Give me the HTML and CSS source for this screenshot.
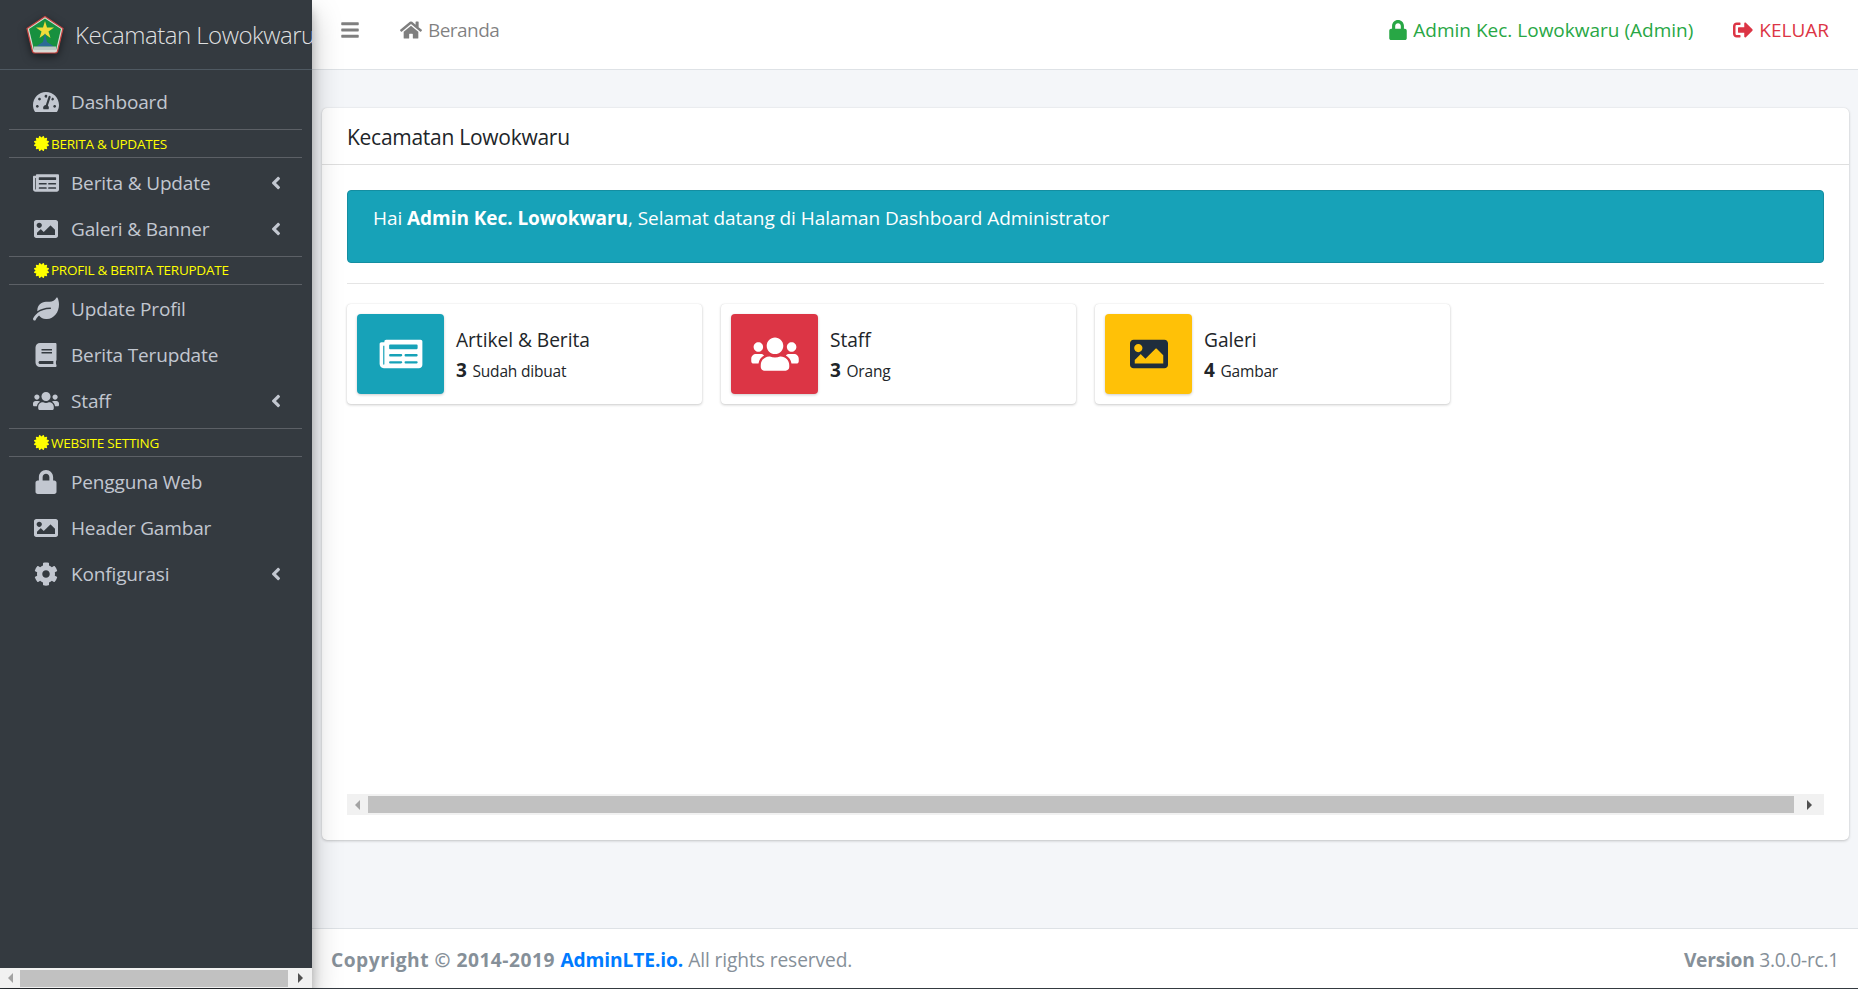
FILE: index.html
```html
<!DOCTYPE html>
<html lang="en">
<head>
  <meta charset="UTF-8" />
  <title>Kecamatan Lowokwaru</title>
  <link rel="stylesheet" href="styles.css">
</head>
<body>
  <svg class="sprite" xmlns="http://www.w3.org/2000/svg">
    <symbol id="i-gauge" viewBox="0 0 576 512"><path d="M288 32C128.94 32 0 160.94 0 320c0 52.8 14.25 102.26 39.06 144.8 5.61 9.62 16.3 15.2 27.44 15.2h443c11.14 0 21.83-5.58 27.44-15.2C561.75 422.26 576 372.8 576 320c0-159.06-128.94-288-288-288zm0 64c14.71 0 26.58 10.13 30.32 23.65-1.11 2.26-2.64 4.23-3.45 6.67l-9.22 27.67c-5.13 3.49-10.97 6.01-17.64 6.01-17.67 0-32-14.33-32-32S270.33 96 288 96zM96 384c-17.67 0-32-14.33-32-32s14.33-32 32-32 32 14.33 32 32-14.33 32-32 32zm48-160c-17.67 0-32-14.33-32-32s14.33-32 32-32 32 14.33 32 32-14.33 32-32 32zm246.77-72.41l-61.33 184C343.13 347.33 352 364.54 352 384c0 11.72-3.38 22.55-8.88 32H232.88c-5.5-9.45-8.88-20.28-8.88-32 0-33.94 26.5-61.43 59.9-63.59l61.34-184.01c4.17-12.56 17.73-19.45 30.36-15.17 12.57 4.19 19.35 17.79 15.17 30.36zm14.66 57.2l15.52-46.55c3.47-1.29 7.13-2.23 11.05-2.23 17.67 0 32 14.33 32 32s-14.33 32-32 32c-11.38-.01-20.89-6.28-26.57-15.22zM480 384c-17.67 0-32-14.33-32-32s14.33-32 32-32 32 14.33 32 32-14.33 32-32 32z"/></symbol>
    <symbol id="i-news" viewBox="0 0 576 512"><path d="M552 64H88c-13.255 0-24 10.745-24 24v8H24c-13.255 0-24 10.745-24 24v272c0 30.928 25.072 56 56 56h472c26.51 0 48-21.49 48-48V88c0-13.255-10.745-24-24-24zM56 400a8 8 0 0 1-8-8V144h16v248a8 8 0 0 1-8 8zm236-16H140c-6.627 0-12-5.373-12-12v-8c0-6.627 5.373-12 12-12h152c6.627 0 12 5.373 12 12v8c0 6.627-5.373 12-12 12zm208 0H348c-6.627 0-12-5.373-12-12v-8c0-6.627 5.373-12 12-12h152c6.627 0 12 5.373 12 12v8c0 6.627-5.373 12-12 12zm-208-96H140c-6.627 0-12-5.373-12-12v-8c0-6.627 5.373-12 12-12h152c6.627 0 12 5.373 12 12v8c0 6.627-5.373 12-12 12zm208 0H348c-6.627 0-12-5.373-12-12v-8c0-6.627 5.373-12 12-12h152c6.627 0 12 5.373 12 12v8c0 6.627-5.373 12-12 12zm0-96H140c-6.627 0-12-5.373-12-12v-40c0-6.627 5.373-12 12-12h360c6.627 0 12 5.373 12 12v40c0 6.627-5.373 12-12 12z"/></symbol>
    <symbol id="i-image" viewBox="0 0 512 512"><path d="M464 448H48c-26.51 0-48-21.49-48-48V112c0-26.51 21.49-48 48-48h416c26.51 0 48 21.49 48 48v288c0 26.51-21.49 48-48 48zM112 120c-30.928 0-56 25.072-56 56s25.072 56 56 56 56-25.072 56-56-25.072-56-56-56zM64 384h384V272l-87.515-87.515c-4.686-4.686-12.284-4.686-16.971 0L208 320l-55.515-55.515c-4.686-4.686-12.284-4.686-16.971 0L64 336v48z"/></symbol>
    <symbol id="i-leaf" viewBox="0 0 576 512"><path d="M546.2 9.7c-5.6-12.5-21.6-13-28.3-1.2C486.9 62.4 431.4 96 368 96h-80C182 96 96 182 96 288c0 7 .8 13.7 1.5 20.5C161.3 262.8 253.4 224 384 224c8.8 0 16 7.2 16 16s-7.2 16-16 16C132.6 256 26 410.1 2.4 468c-6.6 16.3 1.2 34.9 17.5 41.6 16.4 6.8 35-1.1 41.8-17.3 1.5-3.6 20.9-47.9 71.9-90.6 32.4 43.9 94 85.8 174.9 77.2C465.5 467.5 576 326.7 576 154.3c0-50.2-10.8-102.2-29.8-144.6z"/></symbol>
    <symbol id="i-book" viewBox="0 0 448 512"><path d="M448 360V24c0-13.3-10.7-24-24-24H96C43 0 0 43 0 96v320c0 53 43 96 96 96h328c13.3 0 24-10.7 24-24v-16c0-7.5-3.5-14.3-8.9-18.7-4.2-15.4-4.2-59.3 0-74.7 5.4-4.3 8.9-11.1 8.9-18.6zM128 134c0-3.3 2.7-6 6-6h212c3.3 0 6 2.7 6 6v20c0 3.3-2.7 6-6 6H134c-3.3 0-6-2.7-6-6v-20zm0 64c0-3.3 2.7-6 6-6h212c3.3 0 6 2.7 6 6v20c0 3.3-2.7 6-6 6H134c-3.3 0-6-2.7-6-6v-20zm253.4 250H96c-17.7 0-32-14.3-32-32 0-17.6 14.4-32 32-32h285.4c-1.9 17.1-1.9 46.9 0 64z"/></symbol>
    <symbol id="i-users" viewBox="0 0 640 512"><path d="M96 224c35.3 0 64-28.7 64-64s-28.7-64-64-64-64 28.7-64 64 28.7 64 64 64zm448 0c35.3 0 64-28.7 64-64s-28.7-64-64-64-64 28.7-64 64 28.7 64 64 64zm32 32h-64c-17.6 0-33.5 7.1-45.1 18.6 40.3 22.1 68.9 62 75.1 109.4h66c17.7 0 32-14.3 32-32v-32c0-35.3-28.7-64-64-64zm-256 0c61.9 0 112-50.1 112-112S381.9 32 320 32 208 82.1 208 144s50.1 112 112 112zm76.8 32h-8.3c-20.8 10-43.9 16-68.5 16s-47.6-6-68.5-16h-8.3C179.6 288 128 339.6 128 403.2V432c0 26.5 21.5 48 48 48h288c26.5 0 48-21.5 48-48v-28.8c0-63.6-51.6-115.2-115.2-115.2zm-223.7-13.4C161.5 263.1 145.6 256 128 256H64c-35.3 0-64 28.7-64 64v32c0 17.7 14.3 32 32 32h65.9c6.3-47.4 34.9-87.3 75.2-109.4z"/></symbol>
    <symbol id="i-lock" viewBox="0 0 448 512"><path d="M400 224h-24v-72C376 68.2 307.8 0 224 0S72 68.2 72 152v72H48c-26.5 0-48 21.5-48 48v192c0 26.5 21.5 48 48 48h352c26.5 0 48-21.5 48-48V272c0-26.5-21.5-48-48-48zm-104 0H152v-72c0-39.7 32.3-72 72-72s72 32.3 72 72v72z"/></symbol>
    <symbol id="i-cog" viewBox="0 0 512 512"><path d="M487.4 315.7l-42.6-24.6c4.3-23.2 4.3-47 0-70.2l42.6-24.6c4.9-2.8 7.1-8.6 5.5-14-11.1-35.6-30-67.8-54.7-94.6-3.8-4.1-10-5.1-14.8-2.3L380.8 110c-17.9-15.4-38.5-27.3-60.8-35.1V25.8c0-5.6-3.9-10.5-9.4-11.7-36.7-8.2-74.3-7.8-109.2 0-5.5 1.2-9.4 6.1-9.4 11.7V75c-22.2 7.9-42.8 19.8-60.8 35.1L88.7 85.5c-4.9-2.8-11-1.9-14.8 2.3-24.7 26.7-43.6 58.9-54.7 94.6-1.7 5.4.6 11.2 5.5 14L67.3 221c-4.3 23.2-4.3 47 0 70.2l-42.6 24.6c-4.9 2.8-7.1 8.6-5.5 14 11.1 35.6 30 67.8 54.7 94.6 3.8 4.1 10 5.1 14.8 2.3l42.6-24.6c17.9 15.4 38.5 27.3 60.8 35.1v49.2c0 5.6 3.9 10.5 9.4 11.7 36.7 8.2 74.3 7.8 109.2 0 5.5-1.2 9.4-6.1 9.4-11.7v-49.2c22.2-7.9 42.8-19.8 60.8-35.1l42.6 24.6c4.9 2.8 11 1.9 14.8-2.3 24.7-26.7 43.6-58.9 54.7-94.6 1.5-5.5-.7-11.3-5.6-14.1zM256 336c-44.1 0-80-35.9-80-80s35.9-80 80-80 80 35.9 80 80-35.9 80-80 80z"/></symbol>
    <symbol id="i-angle" viewBox="0 0 256 512"><path d="M31.7 239l136-136c9.4-9.4 24.6-9.4 33.9 0l22.6 22.6c9.4 9.4 9.4 24.6 0 33.9L127.9 256l96.4 96.4c9.4 9.4 9.4 24.6 0 33.9L201.7 409c-9.4 9.4-24.6 9.4-33.9 0l-136-136c-9.5-9.4-9.5-24.6-.1-34z"/></symbol>
    <symbol id="i-cert" viewBox="0 0 512 512"><path d="M458.622 255.92l45.985-45.005c13.708-12.977 7.316-36.039-10.664-40.339l-62.65-15.99 17.661-62.015c4.991-17.838-11.829-34.663-29.661-29.671l-61.994 17.667-15.984-62.671C337.085.197 313.765-6.276 300.99 7.228L256 53.57 211.011 7.229c-12.63-13.351-36.047-7.234-40.325 10.668l-15.984 62.671-61.995-17.667C74.87 57.907 58.056 74.738 63.046 92.572l17.661 62.015-62.65 15.99C.069 174.878-6.31 197.944 7.392 210.915l45.985 45.005-45.985 45.004c-13.708 12.977-7.316 36.039 10.664 40.339l62.65 15.99-17.661 62.015c-4.991 17.838 11.829 34.663 29.661 29.671l61.994-17.667 15.984 62.671c4.439 18.575 27.696 24.018 40.325 10.668L256 458.61l44.989 46.001c12.5 13.488 35.987 7.486 40.325-10.668l15.984-62.671 61.994 17.667c17.836 4.994 34.651-11.837 29.661-29.671l-17.661-62.015 62.65-15.99c17.987-4.302 24.366-27.367 10.664-40.339l-45.984-45.004z"/></symbol>
    <symbol id="i-home" viewBox="0 0 576 512"><path d="M280.37 148.26L96 300.11V464a16 16 0 0 0 16 16l112.06-.29a16 16 0 0 0 15.92-16V368a16 16 0 0 1 16-16h64a16 16 0 0 1 16 16v95.64a16 16 0 0 0 16 16.05L464 480a16 16 0 0 0 16-16V300L295.67 148.26a12.19 12.19 0 0 0-15.3 0zM571.6 251.47L488 182.56V44.05a12 12 0 0 0-12-12h-56a12 12 0 0 0-12 12v72.61L318.47 43a48 48 0 0 0-61 0L4.34 251.47a12 12 0 0 0-1.6 16.9l25.5 31A12 12 0 0 0 45.15 301l235.22-193.74a12.19 12.19 0 0 1 15.3 0L530.9 301a12 12 0 0 0 16.9-1.6l25.5-31a12 12 0 0 0-1.7-16.93z"/></symbol>
    <symbol id="i-bars" viewBox="0 0 448 512"><path d="M16 132h416c8.837 0 16-7.163 16-16V76c0-8.837-7.163-16-16-16H16C7.163 60 0 67.163 0 76v40c0 8.837 7.163 16 16 16zm0 160h416c8.837 0 16-7.163 16-16v-40c0-8.837-7.163-16-16-16H16c-8.837 0-16 7.163-16 16v40c0 8.837 7.163 16 16 16zm0 160h416c8.837 0 16-7.163 16-16v-40c0-8.837-7.163-16-16-16H16c-8.837 0-16 7.163-16 16v40c0 8.837 7.163 16 16 16z"/></symbol>
    <symbol id="i-out" viewBox="0 0 512 512"><path d="M497 273L329 441c-15 15-41 4.5-41-17v-96H152c-13.3 0-24-10.7-24-24v-96c0-13.3 10.7-24 24-24h136V88c0-21.4 25.9-32 41-17l168 168c9.3 9.4 9.3 24.6 0 34zM192 436v-40c0-6.6-5.4-12-12-12H96c-17.7 0-32-14.3-32-32V160c0-17.7 14.3-32 32-32h84c6.6 0 12-5.4 12-12V76c0-6.6-5.4-12-12-12H96c-53 0-96 43-96 96v192c0 53 43 96 96 96h84c6.6 0 12-5.4 12-12z"/></symbol>
  </svg>

  <div class="wrapper">
    <aside class="sidebar">
      <a class="brand" href="#">
        <svg class="brand-logo" viewBox="0 0 40 40" xmlns="http://www.w3.org/2000/svg">
          <path d="M20 1.500 38 13.500 32.500 36.500Q32 38 30 38L10 38Q8 38 7.500 36.500L2 13.500Z" fill="#d9dcd6" stroke="#c4433f" stroke-width="1.200"/>
          <path d="M20 3.500 36 14 31 35 9 35 4 14Z" fill="#17903f"/>
          <path d="M20 6 22 12.500 29 12.500 23.500 16.500 25.500 23 20 19 14.500 23 16.500 16.500 11 12.500 18 12.500Z" fill="#f0dc3a"/>
          <path d="M20 18 22 27 29 31.500 11 31.500 18 27Z" fill="#2b6a96"/>
          <rect x="9" y="31.500" width="22" height="3.500" fill="#bcc8c4"/>
        </svg>
        <span class="brand-text">Kecamatan Lowokwaru</span>
      </a>

      <nav class="menu">
        <a class="menu-item" href="#"><svg class="menu-icon"><use href="#i-gauge"/></svg><span>Dashboard</span></a>
        <div class="menu-header"><svg class="sun"><use href="#i-cert"/></svg>BERITA &amp; UPDATES</div>
        <a class="menu-item" href="#"><svg class="menu-icon"><use href="#i-news"/></svg><span>Berita &amp; Update</span><svg class="chevron"><use href="#i-angle"/></svg></a>
        <a class="menu-item" href="#"><svg class="menu-icon"><use href="#i-image"/></svg><span>Galeri &amp; Banner</span><svg class="chevron"><use href="#i-angle"/></svg></a>
        <div class="menu-header"><svg class="sun"><use href="#i-cert"/></svg>PROFIL &amp; BERITA TERUPDATE</div>
        <a class="menu-item" href="#"><svg class="menu-icon"><use href="#i-leaf"/></svg><span>Update Profil</span></a>
        <a class="menu-item" href="#"><svg class="menu-icon"><use href="#i-book"/></svg><span>Berita Terupdate</span></a>
        <a class="menu-item" href="#"><svg class="menu-icon"><use href="#i-users"/></svg><span>Staff</span><svg class="chevron"><use href="#i-angle"/></svg></a>
        <div class="menu-header"><svg class="sun"><use href="#i-cert"/></svg>WEBSITE SETTING</div>
        <a class="menu-item" href="#"><svg class="menu-icon"><use href="#i-lock"/></svg><span>Pengguna Web</span></a>
        <a class="menu-item" href="#"><svg class="menu-icon"><use href="#i-image"/></svg><span>Header Gambar</span></a>
        <a class="menu-item" href="#"><svg class="menu-icon"><use href="#i-cog"/></svg><span>Konfigurasi</span><svg class="chevron"><use href="#i-angle"/></svg></a>
      </nav>

      <div class="hscroll hscroll-side">
        <span class="arrow arrow-left arrow-dim"></span>
        <span class="thumb"></span>
        <span class="arrow arrow-right"></span>
      </div>
    </aside>

    <div class="main">
      <header class="navbar">
        <a class="nav-link nav-bars" href="#"><svg class="nav-icon"><use href="#i-bars"/></svg></a>
        <a class="nav-link nav-home" href="#"><svg class="nav-icon home-icon"><use href="#i-home"/></svg>Beranda</a>
        <a class="nav-link nav-user" href="#"><svg class="nav-icon"><use href="#i-lock"/></svg>Admin Kec. Lowokwaru (Admin)</a>
        <a class="nav-link nav-out" href="#"><svg class="nav-icon"><use href="#i-out"/></svg>KELUAR</a>
      </header>

      <main class="content">
        <section class="card">
          <div class="card-header">Kecamatan Lowokwaru</div>
          <div class="card-body">
            <div class="alert">Hai <b>Admin Kec. Lowokwaru</b>, Selamat datang di Halaman Dashboard Administrator</div>
            <hr class="divider">
            <div class="info-row">
              <div class="info-box">
                <span class="info-icon bg-info"><svg><use href="#i-news"/></svg></span>
                <div class="info-text">
                  <span class="info-title">Artikel &amp; Berita</span>
                  <span class="info-sub"><b>3</b> Sudah dibuat</span>
                </div>
              </div>
              <div class="info-box">
                <span class="info-icon bg-danger"><svg><use href="#i-users"/></svg></span>
                <div class="info-text">
                  <span class="info-title">Staff</span>
                  <span class="info-sub"><b>3</b> Orang</span>
                </div>
              </div>
              <div class="info-box">
                <span class="info-icon bg-warning"><svg><use href="#i-image"/></svg></span>
                <div class="info-text">
                  <span class="info-title">Galeri</span>
                  <span class="info-sub"><b>4</b> Gambar</span>
                </div>
              </div>
            </div>
            <div class="hscroll hscroll-card">
              <span class="arrow arrow-left arrow-dim"></span>
              <span class="thumb"></span>
              <span class="arrow arrow-right"></span>
            </div>
          </div>
        </section>
      </main>

      <footer class="footer">
        <div class="copyright"><b>Copyright &copy; 2014-2019 <a href="#">AdminLTE.io.</a></b> All rights reserved.</div>
        <div class="version"><b>Version</b> 3.0.0-rc.1</div>
      </footer>
    </div>
  </div>
</body>
</html>
```

FILE: styles.css
```css
* {
  box-sizing: border-box;
}

body {
  margin: 0;
  font-family: "Open Sans", "Noto Sans", sans-serif;
  font-size: 18px;
  color: #212529;
  background: #f4f6f9;
  overflow: hidden;
}

a {
  text-decoration: none;
  color: inherit;
}

.sprite {
  display: none;
}

.wrapper {
  display: flex;
  height: 989px;
  border-bottom: 1px solid #343a40;
}

/* SIDEBAR */
.sidebar {
  width: 312px;
  flex: none;
  display: flex;
  flex-direction: column;
  background: #343a40;
  box-shadow: 0 14px 28px rgba(0, 0, 0, 0.25), 0 10px 10px rgba(0, 0, 0, 0.22);
  position: relative;
  z-index: 5;
}

.brand {
  height: 70px;
  flex: none;
  display: flex;
  align-items: center;
  padding-left: 25px;
  border-bottom: 1px solid #4f5962;
  overflow: hidden;
  white-space: nowrap;
}

.brand-logo {
  width: 40px;
  height: 40px;
  flex: none;
  margin-right: 10px;
  filter: drop-shadow(0 3px 4px rgba(0, 0, 0, 0.5));
}

.brand-text {
  font-size: 24px;
  font-weight: 300;
  letter-spacing: -0.5px;
  color: rgba(255, 255, 255, 0.85);
}

.menu {
  flex: 1;
  padding: 9px 10px 0 9px;
}

.menu-item {
  display: flex;
  align-items: center;
  height: 46px;
  padding-left: 24px;
  padding-right: 20px;
  color: #c2c7d0;
  font-size: 19px;
  letter-spacing: -0.15px;
}

.menu-icon {
  width: 26px;
  height: 24px;
  margin-right: 12px;
  fill: #c2c7d0;
  flex: none;
}

.chevron {
  width: 12px;
  height: 20px;
  margin-left: auto;
  fill: #c2c7d0;
}

.menu-header {
  display: flex;
  align-items: center;
  height: 29px;
  margin: 4px 0 1.6px;
  padding-left: 25px;
  border-top: 1px solid #5c6066;
  border-bottom: 1px solid #5c6066;
  color: #ff0;
  font-size: 13.5px;
  letter-spacing: -0.25px;
}

.sun {
  width: 15px;
  height: 15px;
  margin-right: 2px;
  fill: #ff0;
}

/* fake scrollbars, the screenshot has them drawn by the browser */
.hscroll {
  display: flex;
  align-items: center;
  flex: none;
  height: 21px;
  background: #f1f1f1;
}

.hscroll-side {
  height: 20px;
}

.thumb {
  flex: 1;
  height: 17px;
  background: #c1c1c1;
}

.arrow {
  width: 21px;
  flex: none;
  display: flex;
  justify-content: center;
}

.arrow::before {
  content: "";
  border-top: 5px solid transparent;
  border-bottom: 5px solid transparent;
}

.arrow-left::before {
  border-right: 5px solid #505050;
}

.arrow-right::before {
  border-left: 5px solid #505050;
}

.arrow-dim::before {
  border-right-color: #a3a3a3;
}

.hscroll-side .arrow-left {
  width: 20px;
}

.hscroll-side .arrow-right {
  width: 24px;
}

.hscroll-card .arrow-right {
  width: 30px;
}

/* TOP BAR */
.main {
  flex: 1;
  min-width: 0;
  display: flex;
  flex-direction: column;
}

.navbar {
  height: 70px;
  flex: none;
  display: flex;
  align-items: center;
  background: #fff;
  border-bottom: 1px solid #dee2e6;
  font-size: 19px;
  padding-bottom: 10px;
}

.nav-link {
  display: flex;
  align-items: center;
  color: rgba(0, 0, 0, 0.5);
}

.nav-icon {
  width: 18px;
  height: 20px;
  margin-right: 6px;
  fill: currentColor;
}

.nav-bars {
  margin-left: 29px;
}

.nav-bars .nav-icon {
  margin-right: 0;
}

.nav-home {
  margin-left: 41px;
  letter-spacing: -0.55px;
}

.home-icon {
  width: 22px;
}

.nav-user {
  margin-left: auto;
  color: #28a745;
}

.nav-out {
  margin-left: 40px;
  margin-right: 29px;
  color: #dc3545;
}

.nav-out .nav-icon {
  width: 20px;
}

/* CONTENT */
.content {
  flex: 1;
  padding: 38px 9px 0 10px;
}

.card {
  height: 732px;
  display: flex;
  flex-direction: column;
  background: #fff;
  border-radius: 5px;
  box-shadow: 0 0 1px rgba(0, 0, 0, 0.125), 0 1px 3px rgba(0, 0, 0, 0.2);
}

.card-header {
  height: 57px;
  flex: none;
  display: flex;
  align-items: center;
  padding: 2px 25px 0;
  border-bottom: 1px solid rgba(0, 0, 0, 0.125);
  font-size: 21px;
  letter-spacing: -0.27px;
}

.card-body {
  flex: 1;
  display: flex;
  flex-direction: column;
  padding: 25px 25px 25px;
}

.alert {
  height: 73px;
  flex: none;
  padding: 14px 25px;
  background: #17a2b8;
  border: 1px solid #148ea1;
  border-radius: 4px;
  color: #fff;
  font-size: 19px;
  letter-spacing: -0.06px;
}

.divider {
  width: 100%;
  margin: 20px 0 20px;
  border: 0;
  border-top: 1px solid rgba(0, 0, 0, 0.1);
}

.info-row {
  display: flex;
  gap: 19px;
}

.info-box {
  width: 355px;
  height: 100px;
  display: flex;
  padding: 10px;
  background: #fff;
  border-radius: 4px;
  box-shadow: 0 0 1px rgba(0, 0, 0, 0.125), 0 1px 3px rgba(0, 0, 0, 0.2);
}

.info-icon {
  width: 87px;
  height: 80px;
  flex: none;
  display: flex;
  align-items: center;
  justify-content: center;
  border-radius: 4px;
  box-shadow: 0 1px 3px rgba(0, 0, 0, 0.2);
}

.info-icon svg {
  width: 48px;
  height: 38px;
  fill: currentColor;
}

.bg-info {
  background: #17a2b8;
  color: #fff;
}

.bg-danger {
  background: #dc3545;
  color: #fff;
}

.bg-warning {
  background: #ffc107;
  color: #1f2d3d;
}

.info-text {
  display: flex;
  flex-direction: column;
  justify-content: center;
  padding: 1px 0 0 12px;
  gap: 4px;
}

.info-title {
  font-size: 19.2px;
  letter-spacing: -0.05px;
}

.info-sub {
  font-size: 15.5px;
  letter-spacing: -0.2px;
}

.info-sub b {
  font-size: 19px;
  margin-right: 2px;
}

.hscroll-card {
  margin-top: auto;
}

/* FOOTER */
.footer {
  height: 60px;
  flex: none;
  display: flex;
  align-items: center;
  justify-content: space-between;
  padding: 2px 19px 0 19px;
  background: #fff;
  border-top: 1px solid #dee2e6;
  color: #869099;
  font-size: 19.2px;
  letter-spacing: -0.1px;
}

.copyright b {
  letter-spacing: 0.5px;
}

.footer a {
  color: #007bff;
  letter-spacing: -0.1px;
}

.version {
  letter-spacing: -0.25px;
}
```
